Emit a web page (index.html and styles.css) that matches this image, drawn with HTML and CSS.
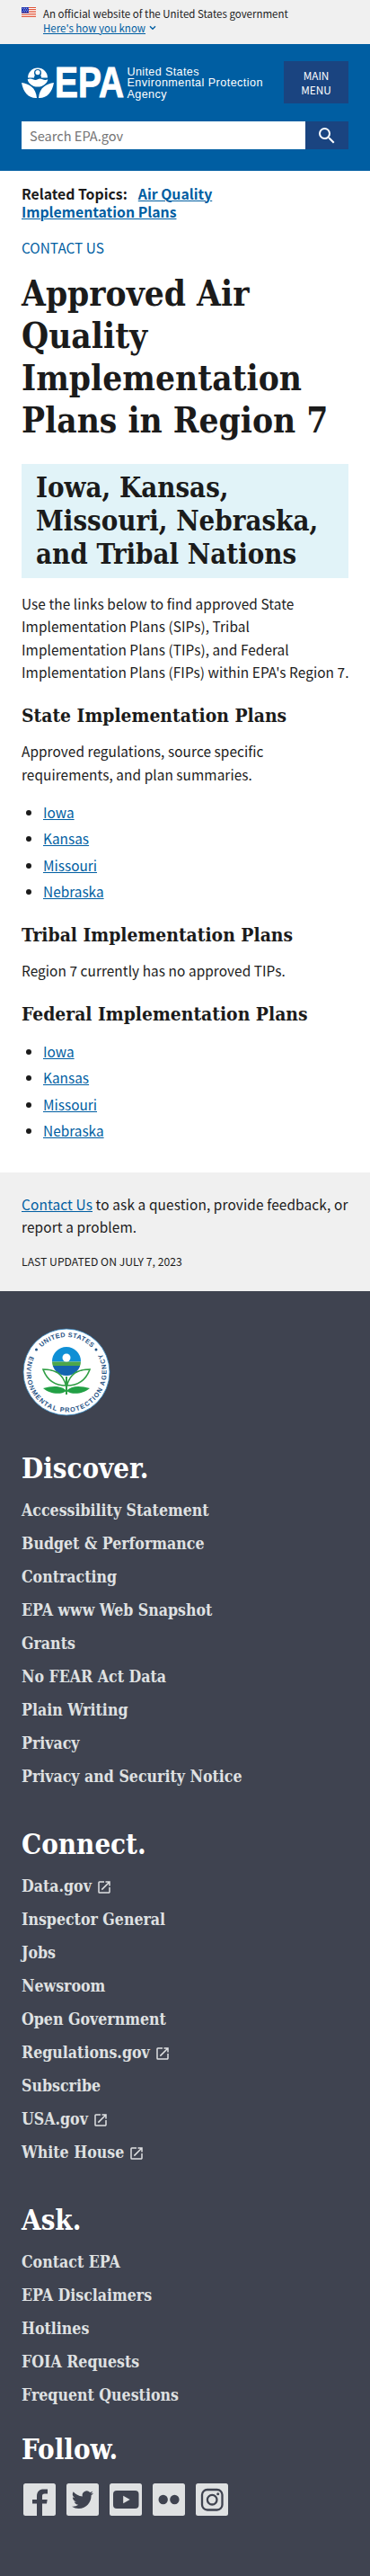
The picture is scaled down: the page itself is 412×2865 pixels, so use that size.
FILE: index.html
```
<!DOCTYPE html>
<html lang="en">
<head>
<meta charset="utf-8">
<title>Approved Air Quality Implementation Plans in Region 7 | US EPA</title>
<link rel="stylesheet" href="styles.css">
</head>
<body>
<svg width="0" height="0" class="defs" aria-hidden="true">
  <symbol id="launch" viewBox="0 0 24 24"><path d="M19 19H5V5h7V3H5a2 2 0 0 0-2 2v14a2 2 0 0 0 2 2h14c1.100 0 2-.9 2-2v-7h-2v7zM14 3v2h3.590l-9.830 9.830 1.410 1.410L19 6.410V10h2V3h-7z"/></symbol>
</svg>

<section class="banner">
  <svg class="flag" width="16" height="11" viewBox="0 0 16 11">
    <path fill="#fff" d="M0 0h16v11H0z"/>
    <path stroke="#db3e1f" stroke-width=".9" d="M0 .5h16M0 2.500h16M0 4.500h16M0 6.500h16M0 8.500h16M0 10.500h16"/>
    <path fill="#1e33b1" d="M0 0h8v6.500H0z"/>
    <path stroke="#fff" stroke-width=".8" stroke-dasharray=".8 1.200" d="M1 1.300h6.500M2 3.100h5.500M1 4.900h6.500"/>
  </svg>
  <div class="banner-text">
    <div>An official website of the United States government</div>
    <div class="know"><a href="#">Here's how you know</a>
      <svg width="8" height="6" viewBox="0 0 8 6"><path d="M1 1.200l3 3 3-3" fill="none" stroke="#005ea2" stroke-width="1.400"/></svg>
    </div>
  </div>
</section>

<header class="header">
  <div class="brand-row">
    <svg class="logo" width="270" height="58" viewBox="0 -10 270 58">
      <g fill="#fff">
        <path d="M7 13.500a11 11 0 0 1 22 0h-7a4 4 0 1 0-8 0z"/>
        <circle cx="18" cy="8" r="4" fill="#005ea2"/>
        <circle cx="18" cy="7.600" r="2.600" fill="#fff"/>
        <path d="M6.700 15.200q3-1.400 6 0t5.300 0 5.300 0 6 0c-.8 4.500-5 8.300-11.300 8.300S7.500 19.700 6.700 15.200z"/>
        <path d="M0 19c8 1 16 5 17 17C8 36.500 2 30 0 19zM36 19c-8 1-16 5-17 17C28 36.500 34 30 36 19z"/>
      </g>
      <text class="logo-epa" x="37" y="35" textLength="77" lengthAdjust="spacingAndGlyphs">EPA</text>
      <text class="logo-name" x="117.500" y="10.500" textLength="80">United States</text>
      <text class="logo-name" x="117.500" y="23.200" textLength="151">Environmental Protection</text>
      <text class="logo-name" x="117.500" y="36" textLength="44">Agency</text>
    </svg>
    <button class="menu">MAIN<br>MENU</button>
  </div>
  <form class="search">
    <div class="search-box">Search EPA.gov</div>
    <button class="search-btn" type="button" aria-label="Search">
      <svg width="24" height="24" viewBox="0 0 24 24"><path fill="#fff" d="M15.500 14h-.79l-.28-.27A6.470 6.470 0 0 0 16 9.500 6.500 6.500 0 1 0 9.500 16c1.610 0 3.090-.59 4.230-1.570l.27.28v.79l5 4.990L20.490 19l-4.990-5zm-6 0C7.010 14 5 11.990 5 9.500S7.010 5 9.500 5 14 7.010 14 9.500 11.990 14 9.500 14z"/></svg>
    </button>
  </form>
</header>

<main class="main">
  <div class="related"><span class="related-label">Related Topics:</span><a href="#">Air Quality<br>Implementation Plans</a></div>
  <div class="contact"><a href="#">CONTACT US</a></div>
  <h1>Approved Air Quality Implementation Plans in Region 7</h1>
  <h2>Iowa, Kansas, Missouri, Nebraska, and Tribal Nations</h2>
  <p class="intro">Use the links below to find approved State<br>Implementation Plans (SIPs), Tribal<br>Implementation Plans (TIPs), and Federal<br>Implementation Plans (FIPs) within EPA's Region 7.</p>
  <h3>State Implementation Plans</h3>
  <p>Approved regulations, source specific<br>requirements, and plan summaries.</p>
  <ul class="links">
    <li><a href="#">Iowa</a></li><li><a href="#">Kansas</a></li><li><a href="#">Missouri</a></li><li><a href="#">Nebraska</a></li>
  </ul>
  <h3>Tribal Implementation Plans</h3>
  <p>Region 7 currently has no approved TIPs.</p>
  <h3>Federal Implementation Plans</h3>
  <ul class="links">
    <li><a href="#">Iowa</a></li><li><a href="#">Kansas</a></li><li><a href="#">Missouri</a></li><li><a href="#">Nebraska</a></li>
  </ul>
</main>

<section class="feedback">
  <p><a href="#">Contact Us</a> to ask a question, provide feedback, or<br>report a problem.</p>
  <div class="updated">LAST UPDATED ON JULY 7, 2023</div>
</section>

<footer class="footer">
  <svg class="seal" width="100" height="100" viewBox="0 0 100 100">
    <defs>
      <path id="arc-top" d="M11 50a39 39 0 0 1 78 0"/>
      <path id="arc-bottom" d="M9.700 31.200A44.500 44.500 0 1 0 90.300 31.200"/>
      <clipPath id="globe"><circle cx="50" cy="38" r="16"/></clipPath>
    </defs>
    <circle cx="50" cy="50" r="48" fill="#fff" stroke="#2a80bd" stroke-width=".8"/>
    <text class="seal-text"><textPath href="#arc-top" startOffset="30.500" textLength="62">UNITED STATES</textPath></text>
    <text class="seal-text"><textPath href="#arc-bottom" startOffset="1" textLength="179">ENVIRONMENTAL PROTECTION AGENCY</textPath></text>
    <circle cx="16.500" cy="25" r="1.500" fill="#1f5285"/><circle cx="83" cy="25" r="1.500" fill="#1f5285"/>
    <g clip-path="url(#globe)">
      <path fill="#0f8fd5" d="M30 20h40v18.500H30z"/>
      <path fill="#4da64a" d="M30 38.500h40v4.500H30z"/>
      <path fill="#1464b0" d="M30 43h40v15H30z"/>
    </g>
    <circle cx="50" cy="34" r="4.500" fill="#fff"/>
    <path d="M49 75V55h2v20z" fill="#2f9e44"/>
    <g fill="#fff" stroke="#2f9e44" stroke-width="1.600">
      <path d="M49.500 65C46 52 38 47 24 47c4 11 11 18 25.500 18z"/>
      <path d="M50.500 65C54 52 62 47 76 47c-4 11-11 18-25.500 18z"/>
    </g>
    <path fill="#22a045" d="M50 71c-5-6-15-6-26-3 7 6 19 8 26 3zM50 71c5-6 15-6 26-3-7 6-19 8-26 3z"/>
  </svg>

  <h2 class="f-head">Discover.</h2>
  <ul class="f-list">
    <li>Accessibility Statement</li><li>Budget &amp; Performance</li><li>Contracting</li><li>EPA www Web Snapshot</li><li>Grants</li><li>No FEAR Act Data</li><li>Plain Writing</li><li>Privacy</li><li>Privacy and Security Notice</li>
  </ul>
  <h2 class="f-head">Connect.</h2>
  <ul class="f-list">
    <li>Data.gov<svg class="ext"><use href="#launch"/></svg></li><li>Inspector General</li><li>Jobs</li><li>Newsroom</li><li>Open Government</li><li>Regulations.gov<svg class="ext"><use href="#launch"/></svg></li><li>Subscribe</li><li>USA.gov<svg class="ext"><use href="#launch"/></svg></li><li>White House<svg class="ext"><use href="#launch"/></svg></li>
  </ul>
  <h2 class="f-head">Ask.</h2>
  <ul class="f-list ask">
    <li>Contact EPA</li><li>EPA Disclaimers</li><li>Hotlines</li><li>FOIA Requests</li><li>Frequent Questions</li>
  </ul>
  <h2 class="f-head">Follow.</h2>
  <div class="social">
    <svg width="36" height="36" viewBox="0 0 36 36"><rect width="36" height="36" rx="2.500" fill="#dfe1e2"/><path fill="#3f4350" d="M15 36V22.500h-5V18h5v-3.500C15 9 18 6.500 22.500 6.500H27v5h-3.200c-2.200 0-2.800 1-2.800 2.700V18h5.700l-.7 4.500h-5V36z"/></svg>
    <svg width="36" height="36" viewBox="0 0 36 36"><rect width="36" height="36" rx="2.500" fill="#dfe1e2"/><path fill="#3f4350" transform="translate(6 6.200)" d="M23.950 4.570a10 10 0 0 1-2.820.77 4.960 4.960 0 0 0 2.160-2.720c-.95.55-2 .95-3.130 1.180a4.920 4.920 0 0 0-8.380 4.480C7.690 8.090 4.070 6.130 1.640 3.160a4.920 4.920 0 0 0 1.520 6.570 4.900 4.900 0 0 1-2.230-.61v.06c0 2.390 1.700 4.380 3.950 4.830a5 5 0 0 1-2.210.08 4.940 4.940 0 0 0 4.600 3.420A9.870 9.870 0 0 1 0 19.540a14 14 0 0 0 7.550 2.210c9.050 0 14-7.500 14-13.980 0-.21 0-.42-.02-.63a9.940 9.940 0 0 0 2.460-2.550z"/></svg>
    <svg width="36" height="36" viewBox="0 0 36 36"><rect width="36" height="36" rx="2.500" fill="#dfe1e2"/><rect x="4" y="8" width="28.500" height="20" rx="4" fill="#3f4350"/><path fill="#dfe1e2" d="M15.200 13.700v8.600l7.500-4.300z"/></svg>
    <svg width="36" height="36" viewBox="0 0 36 36"><rect width="36" height="36" rx="2.500" fill="#dfe1e2"/><circle cx="11.700" cy="18" r="5.200" fill="#3f4350"/><circle cx="24.400" cy="18" r="5.200" fill="#3f4350"/></svg>
    <svg width="36" height="36" viewBox="0 0 36 36"><rect width="36" height="36" rx="2.500" fill="#dfe1e2"/><rect x="7" y="7" width="22.500" height="22.500" rx="5.800" fill="none" stroke="#3f4350" stroke-width="2.300"/><circle cx="18.200" cy="18.200" r="5.300" fill="none" stroke="#3f4350" stroke-width="2.300"/><circle cx="24.700" cy="11.700" r="1.500" fill="#3f4350"/></svg>
  </div>
</footer>
</body>
</html>
```

FILE: styles.css
```
* { box-sizing: border-box; }
body {
  margin: 0;
  background: #fff;
  color: #1b1b1b;
  font: 15.4px/25.44px "Noto Sans CJK SC", sans-serif;
}
.defs { display: block; }
a {
  color: #005ea2;
  text-decoration-thickness: 1px;
  text-underline-offset: 1px;
}
h1, h2, h3, .f-list {
  font-family: "DejaVu Serif Condensed", "DejaVu Serif", serif;
  font-weight: 700;
}
h1, h2, h3, p, ul { margin: 0; padding: 0; }
p { letter-spacing: .06px; white-space: nowrap; }

.banner {
  display: flex;
  gap: 8px;
  height: 49px;
  padding: 7px 24px 0;
  background: #f0f0f0;
  font-size: 11.5px;
  line-height: 16px;
}
.flag { margin-top: 1px; }
.know { display: flex; align-items: center; gap: 4px; }

.header { height: 141px; padding: 14px 24px 0; background: #005ea2; }
.brand-row { display: flex; justify-content: space-between; align-items: flex-start; }
.logo { flex: none; }
.logo text { fill: #fff; font-family: "Liberation Sans", Arial, sans-serif; }
.logo .logo-epa { font-size: 48px; font-weight: 700; stroke: #fff; stroke-width: 1; }
.logo .logo-name { font-size: 12.6px; }
.menu {
  flex: none;
  width: 72px;
  height: 47px;
  margin-top: 5px;
  padding: 0;
  border: 0;
  background: #1a4480;
  color: #fff;
  font: 11.8px/16px "Noto Sans CJK SC", sans-serif;
}
.search { display: flex; height: 31px; margin-top: 14px; }
.search-box {
  flex: 1;
  padding: 3px 9px 0;
  background: #fff;
  color: #757575;
  font-size: 14.6px;
  line-height: 25px;
}
.search-btn {
  display: flex;
  align-items: center;
  justify-content: center;
  width: 48px;
  padding: 0;
  border: 0;
  background: #1a4480;
}

.main { height: 1114px; padding: 15.500px 24px 0; }
.related { font-size: 15.8px; line-height: 20px; font-weight: 700; }
.related-label { margin-right: 12px; }
.contact { margin-top: 17px; line-height: 25px; }
.contact a { text-decoration: none; }
h1 { margin-top: 15.500px; font-size: 38.500px; line-height: 47px; }
.main h2 {
  margin: 25px 0 16px;
  padding: 8px 16px;
  background: #e1f3f8;
  font-size: 30.950px;
  line-height: 37px;
}
h3 { margin: 22.100px 0 15.500px; font-size: 20.900px; line-height: 25px; }
.links { margin-top: 16.800px; padding-left: 24px; }
.links li + li { margin-top: 4px; }

.feedback { height: 132px; padding: 22.600px 24px 0; background: #f0f0f0; }
.feedback p { letter-spacing: .12px; }
.updated { margin-top: 16.500px; font-size: 12.200px; line-height: 18px; }

.footer { height: 1429px; padding: 40px 24px 0; background: #3f4350; }
.seal { display: block; margin-bottom: 39px; }
.seal-text { fill: #1f5285; font: 700 7.300px "Liberation Sans", Arial, sans-serif; }
.f-head { color: #fff; font-size: 31px; line-height: 37px; }
.f-list {
  margin: 8.500px 0 38.700px;
  list-style: none;
  color: #dfe1e2;
  font-size: 17.600px;
  line-height: 37.100px;
}
.f-list.ask { margin-bottom: 23.800px; }
.ext { width: 18px; height: 18px; margin-left: 5px; vertical-align: -4px; fill: #dfe1e2; }
.social { display: flex; gap: 12px; margin: 19px 2px 0; }
```
